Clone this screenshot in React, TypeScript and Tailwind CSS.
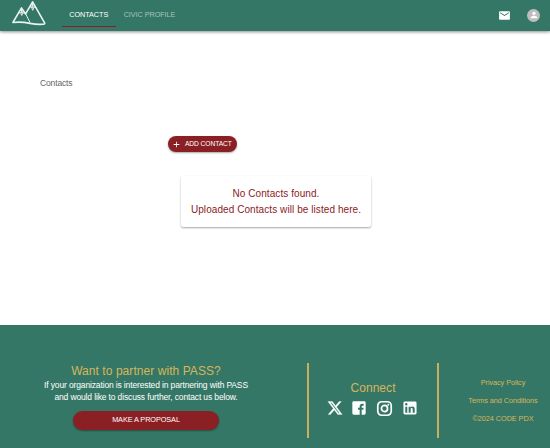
import React from "react";

function MountainLogo() {
  return (
    <svg className="ml-[12px] h-[26px] w-[34px]" viewBox="0 0 34 26" fill="none" stroke="#e8f2ee" strokeWidth="1.6" strokeLinecap="round" strokeLinejoin="round">
      <path d="M.9 22.500 9.500 7.900 13.600 13.900 20.600 1.800 32.600 22.800c.4.8 0 1.300-1.200 1.400-5 .4-8.500.1-13.500-.8C12.500 22.200 7 21.800.9 22.500Z" />
      <path d="M13.600 13.700 18 22.500M6.800 13.200 8.500 12.300 9.700 15.500 10.700 12.400 12.500 13.700M17.600 7 19.300 6.600 20.700 10.300 22 6.800 24 7.600M9.500 8.500v4M20.600 2.500v5M10.900 10.500v2M18.900 5v2M22.100 5v2" strokeWidth="1" />
    </svg>
  );
}

function Header() {
  return (
    <header className="flex h-[31px] bg-[#357766] shadow-[0_1px_3px_rgba(0,0,0,0.45)]">
      <MountainLogo />
      <nav className="ml-[15.500px] flex h-[27px] text-[7.300px] tracking-[-0.080px]">
        <a className="flex w-[54.500px] items-center justify-center border-b border-[#8b2024] pt-[4px] text-white">CONTACTS</a>
        <a className="flex w-[67px] items-center justify-center border-b border-transparent pt-[4px] text-[#a5c3bb]">CIVIC PROFILE</a>
      </nav>
      <div className="mr-[10px] ml-auto flex h-[30px] items-center gap-[16px]">
        <svg className="h-[13px] w-[13px]" viewBox="0 0 24 24" fill="#fff">
          <path d="M20 4H4c-1.100 0-1.990.9-1.990 2L2 18c0 1.100.9 2 2 2h16c1.100 0 2-.9 2-2V6c0-1.100-.9-2-2-2zm0 4-8 5-8-5V6l8 5 8-5v2z" />
        </svg>
        <span className="flex h-[13px] w-[13px] items-center justify-center rounded-full bg-[#bdbdbd]">
          <svg className="h-[10px] w-[10px]" viewBox="0 0 24 24" fill="#fff">
            <path d="M12 12c2.210 0 4-1.790 4-4s-1.790-4-4-4-4 1.790-4 4 1.790 4 4 4zm0 2c-2.670 0-8 1.340-8 4v2h16v-2c0-2.660-5.330-4-8-4z" />
          </svg>
        </span>
      </div>
    </header>
  );
}

function Socials() {
  return (
    <div className="mt-[4px] mr-[1.500px] flex items-center gap-[8.700px]">
      <svg className="h-[16px] w-[16px]" viewBox="0 0 24 24" fill="#fff" stroke="#fff" strokeWidth="0.4">
        <path d="M18.244 2.250h3.308l-7.227 8.260 8.502 11.240H16.170l-5.214-6.817L4.990 21.750H1.680l7.730-8.835L1.254 2.250H8.080l4.713 6.231zm-1.161 17.520h1.833L7.084 4.126H5.117z" />
      </svg>
      <svg className="h-[16px] w-[16px]" viewBox="0 0 24 24" fill="#fff">
        <path d="M20 2H4a2 2 0 0 0-2 2v16a2 2 0 0 0 2 2h9v-7.500h-2.500v-3H13V9.500C13 6.900 14.500 5.500 17 5.500h2v3h-1.500c-1 0-1.500.4-1.500 1.300v1.700h3l-.5 3H16V22h4a2 2 0 0 0 2-2V4a2 2 0 0 0-2-2z" />
      </svg>
      <svg className="h-[17px] w-[17px]" viewBox="0 0 24 24" fill="none" stroke="#fff" strokeWidth="2.400">
        <rect x="2.500" y="2.500" width="19" height="19" rx="5.500" />
        <circle cx="12" cy="12" r="4.300" />
        <circle cx="17.300" cy="6.700" r="1.300" fill="#fff" stroke="none" />
      </svg>
      <svg className="h-[16px] w-[16px]" viewBox="1 1 22 22" fill="#fff">
        <path d="M19 3a2 2 0 0 1 2 2v14a2 2 0 0 1-2 2H5a2 2 0 0 1-2-2V5a2 2 0 0 1 2-2h14m-.5 15.500v-5.300a3.260 3.260 0 0 0-3.260-3.260c-.85 0-1.840.52-2.320 1.300v-1.110h-2.790v8.370h2.790v-4.930c0-.77.62-1.400 1.390-1.400a1.400 1.400 0 0 1 1.400 1.400v4.930h2.790M6.880 8.560a1.680 1.680 0 0 0 1.680-1.680c0-.93-.75-1.690-1.680-1.690a1.690 1.690 0 0 0-1.690 1.690c0 .93.76 1.680 1.690 1.680m1.390 9.940v-8.370H5.500v8.370h2.770z" />
      </svg>
    </div>
  );
}

function Footer() {
  return (
    <footer className="flex h-[123.300px] bg-[#357766] whitespace-nowrap">
      <section className="ml-[16px] flex w-[260px] flex-col items-center pt-[38px] text-white">
        <h2 className="text-[12px] leading-[16px] tracking-[0.060px] text-[#d6b65c]">Want to partner with PASS?</h2>
        <p className="text-center text-[8.500px] leading-[12px] tracking-[-0.140px]">
          If your organization is interested in partnering with PASS
          <br />
          and would like to discuss further, contact us below.
        </p>
        <button className="mt-[8px] h-[19px] w-[146px] rounded-full bg-[#8b2024] text-[7.300px] tracking-[-0.080px] shadow-[0_1px_2px_rgba(0,0,0,0.35)]">MAKE A PROPOSAL</button>
      </section>
      <section className="mt-[38px] ml-[31px] flex h-[75px] w-[132px] flex-col items-center border-x-2 border-[#c9b05e] pt-[17px]">
        <h2 className="text-[12px] leading-[16px] tracking-[0.050px] text-[#d6b65c]">Connect</h2>
        <Socials />
      </section>
      <section className="flex flex-1 flex-col items-center pt-[49px] pl-[17px] text-[7.300px] leading-[18px] tracking-[-0.060px] text-[#d6b65c]">
        <a>Privacy Policy</a>
        <a>Terms and Conditions</a>
        <span>©2024 CODE PDX</span>
      </section>
    </footer>
  );
}

export default function App() {
  return (
    <div className="flex h-[448px] w-[550px] flex-col overflow-hidden bg-white font-['Liberation_Sans',Arial,sans-serif]">
      <Header />
      <main className="flex-1">
        <p className="mt-[46px] ml-[40px] text-[8.500px] leading-[12px] tracking-[-0.140px] text-[#666]">Contacts</p>
        <button className="mt-[47px] ml-[168px] flex h-[16px] w-[69px] items-center rounded-full bg-[#8b2024] pl-[4px] text-[6.700px] tracking-[-0.100px] whitespace-nowrap text-white shadow-[0_1px_2px_rgba(0,0,0,0.350)]">
          <svg className="mr-[4px] h-[9px] w-[9px]" viewBox="1 1 22 22" fill="#fff">
            <path d="M19 13h-6v6h-2v-6H5v-2h6V5h2v6h6v2z" />
          </svg>
          ADD CONTACT
        </button>
        <div className="mt-[24px] ml-[181px] h-[51px] w-[190px] rounded-[2px] bg-white pt-[10px] text-center text-[10px] leading-[16px] tracking-[0.075px] whitespace-nowrap text-[#8b2024] shadow-[0_1px_2px_rgba(0,0,0,0.350)]">
          No Contacts found.
          <br />
          Uploaded Contacts will be listed here.
        </div>
      </main>
      <Footer />
    </div>
  );
}
